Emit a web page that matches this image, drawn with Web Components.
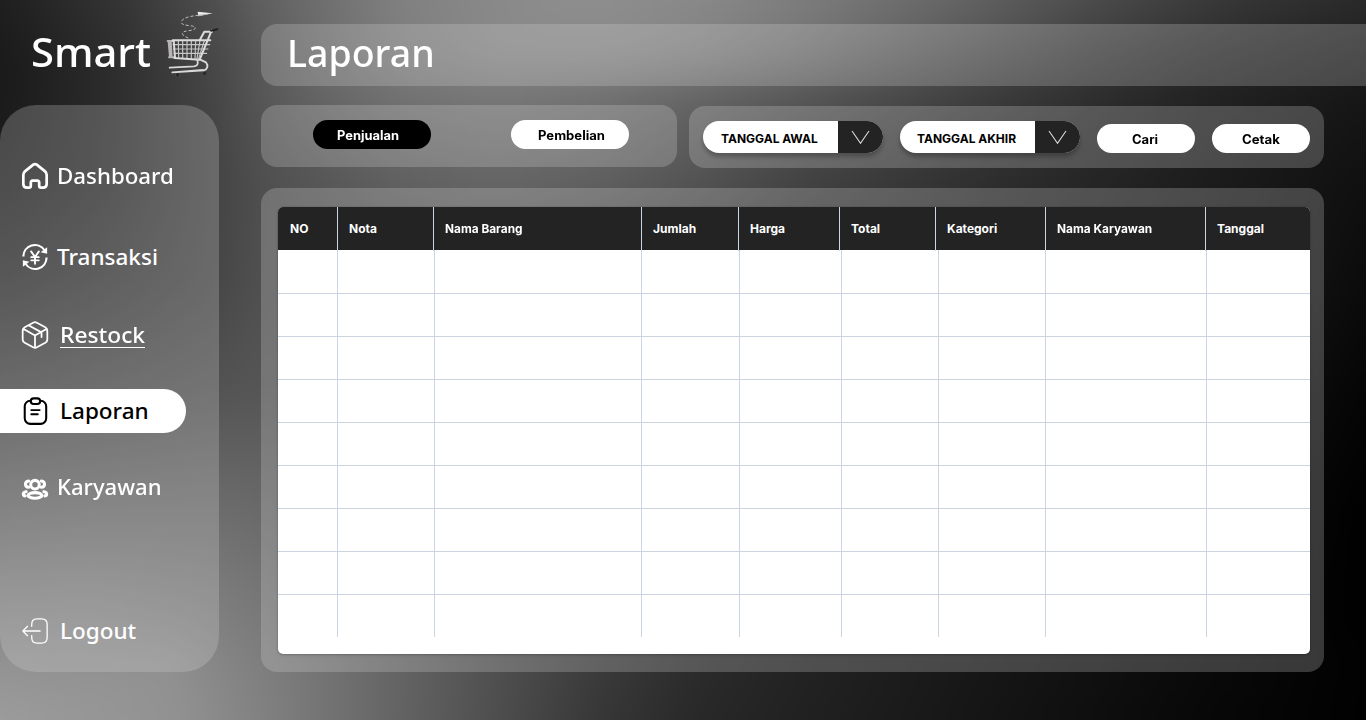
<!DOCTYPE html>
<html lang="id">
<head>
<meta charset="utf-8">
<title>Laporan</title>
<style>
html,body{margin:0;height:100%;overflow:hidden;background:#000}
</style>
</head>
<body>
<report-page></report-page>
<script>
const define=(name,html,setup)=>customElements.define(name,class extends HTMLElement{
  connectedCallback(){
    if(this.shadowRoot)return;
    const t=document.createElement('template');
    t.innerHTML=typeof html==='function'?html(this):html;
    this.attachShadow({mode:'open'}).append(t.content.cloneNode(true));
    if(setup)setup(this);
  }
});

/* Text scaled horizontally to the width given in its attribute */
define('fit-text',`<style>:host{display:inline-block;white-space:nowrap}span{display:inline-block;transform-origin:0 50%}</style><span><slot></slot></span>`,el=>{
  const w=+el.getAttribute('width'),s=el.shadowRoot.querySelector('span');
  s.style.transform=`scaleX(${w/s.offsetWidth})`;
  el.style.width=w+'px';
});

/* Mesh backdrop: horizontal gradients blended into each other down the page */
const mesh=[
 [0,[[0,32],[120,54],[219,82],[261,98],[400,130],[500,139],[585,144],[700,138],[804,126],[950,104],[1097,77],[1243,55],[1366,43]]],
 [55,[[0,27],[120,48],[219,74],[261,90],[320,108],[400,126],[500,137],[620,137],[700,130],[800,115],[900,95],[1000,76],[1100,58],[1200,44],[1366,30]]],
 [97,[[0,27],[100,43],[219,72],[261,88],[330,104],[400,115],[500,120],[600,114],[690,102],[800,87],[900,73],[1000,59],[1100,46],[1200,36],[1366,23]]],
 [180,[[0,32],[100,44],[219,70],[261,80],[400,98],[500,103],[600,97],[700,84],[800,68],[1000,46],[1200,30],[1366,17]]],
 [280,[[0,46],[100,56],[219,71],[261,82],[500,85],[800,55],[1100,33],[1320,18],[1366,12]]],
 [390,[[0,71],[100,77],[219,84],[261,87],[500,80],[800,45],[1100,25],[1320,11],[1366,6]]],
 [500,[[0,102],[100,106],[219,108],[261,105],[500,80],[800,40],[1100,21],[1320,6],[1366,2]]],
 [600,[[0,132],[100,133],[219,126],[261,120],[400,96],[600,60],[800,36],[1100,18],[1320,4],[1366,1]]],
 [672,[[0,149],[170,147],[219,136],[300,122],[400,101],[500,80],[600,60],[700,44],[800,36],[1000,23],[1200,11],[1366,3]]],
 [720,[[0,157],[110,151],[190,145],[219,139],[300,122],[400,100],[500,78],[600,55],[700,41],[800,34],[1000,21],[1200,9],[1366,2]]]
];
const bleed=50;
define('mesh-backdrop',()=>`<style>
:host{display:grid;margin:-${bleed}px;filter:blur(16px)}
i{grid-area:1/1}
</style>`+mesh.map(([y,s],k)=>{
  const g='linear-gradient(90deg,'+s.map(([x,v])=>`rgb(${v},${v-1},${v}) ${x+bleed}px`).join()+')';
  const r=k&&`linear-gradient(transparent ${mesh[k-1][0]+bleed}px,#000 ${y+bleed}px)`;
  const m=k?`;-webkit-mask-image:${r};mask-image:${r}`:'';
  return `<i style="background:${g}${m}"></i>`;
}).join(''));

define('cart-logo',`<style>:host{display:block;width:70px;height:75px}svg{display:block}</style>
<svg width="70" height="75" viewBox="0 0 210 225" fill="none" stroke-linecap="round" stroke-linejoin="round">
<path d="M130 31C112 33 84 36 79 50C76 66 122 58 121 69C118 80 82 74 82 86C84 94 96 96 104 102" stroke="#d0d0d0" stroke-width="2.600" stroke-dasharray="9 6" stroke-linecap="butt"/>
<path d="M128 20l45 5-43 9z" fill="#ececec"/><path d="M130 29l43-4-43 9z" fill="#b5b5b5"/>
<circle cx="68" cy="210" r="7" fill="#2a2a2a" stroke="#484848" stroke-width="3"/><circle cx="149" cy="205" r="7" fill="#2a2a2a" stroke="#484848" stroke-width="3"/>
<path d="M47 108l3 48M41 110l4 46M38 108h18M42 157h16" stroke="#b8b4b4" stroke-width="6"/>
<path d="M70 107l1 50M83 107v51M96 107v52M109 107v53M122 107l-2 54M135 107l-9 53M148 107l-17 54M54 119h110M55 132h104M57 145h98" stroke="#c6c6c6" stroke-width="3.500"/>
<path d="M53 106h113M58 159l76 5M56 107l4 51M134 164l36-88M134 106l14-26h23" stroke="#dcdcdc" stroke-width="6"/>
<path d="M168 77l19-4" stroke="#202020" stroke-width="6"/>
<path d="M127 165c4 14-1 18-10 19l-73 4M136 164l17 8c8 10 4 22-6 24l-95 6M52 202l92-7" stroke="#d8d8d8" stroke-width="5.500"/>
</svg>`);

const icons={
home:`<path d="M4.500 9.800 13.200 2.800q1.800-1.200 3.600 0L25.500 9.800Q27.500 11.400 27.500 14V23.500Q27.500 27.500 23.500 27.500H21.500Q19.500 27.500 19.500 25.500V22.500Q19.500 20 17.500 20H12.500Q10.500 20 10.500 22.500V25.500Q10.500 27.500 8.500 27.500H6.500Q2.500 27.500 2.500 23.500V14Q2.500 11.400 4.500 9.800Z" stroke-width="2.900"/>`,
yen:`<path d="M2.600 14.500A12.300 12.300 0 0 1 25 7.500M27.400 15.500A12.300 12.300 0 0 1 5 22.500" stroke-width="2.300" stroke-linecap="butt"/><path d="M28 4.500v7l-7-1.500zM2 25.500v-7l7 1.500z" fill="currentColor" stroke="none"/><path d="M10.800 9l4.200 6 4.200-6M15 15v7.200M11 15.200h8M11 18.600h8" stroke-width="2"/>`,
box:`<path d="M13 1.800q2-1 4 0l9 4.800q2.200 1.300 2.200 3.700v9.400q0 2.400-2.200 3.700l-9 4.800q-2 1-4 0l-9-4.800q-2.200-1.300-2.200-3.700v-9.400q0-2.400 2.200-3.700zM2.800 8.500 15 15.500l12.200-7M15 15.500v13M8.500 4.800 22 12.200v5" stroke-width="1.900"/>`,
clip:`<rect x="4" y="4" width="23" height="24.800" rx="6" stroke-width="2.200"/><path d="M10.500 4.500q0-3 3-3h4q3 0 3 3t-3 3h-4q-3 0-3-3z" fill="#fff" stroke-width="2.200"/><path d="M11 14h9M11 18.500h7" stroke-width="2"/>`,
people:`<g stroke-width="3.300"><circle cx="15" cy="12.500" r="4.600"/><ellipse cx="15" cy="24" rx="7.300" ry="3"/><path d="M8.200 8.500Q4.800 9 4.800 12t3.400 3.300M21.800 8.500Q25.200 9 25.200 12t-3.400 3.300M5.500 20Q2.500 20.500 2.500 22.500T4.500 24.500M24.500 20Q27.500 20.500 27.500 22.500T25.500 24.500"/></g>`,
exit:`<path d="M11.500 10V8q0-6 5.500-6h5Q28 2 28 8v14q0 6-6 6h-5q-5.500 0-5.500-6v-2M20.500 15H2M7 10 2 15l5 5" stroke-width="1.400"/>`
};
define('menu-icon',el=>`<style>:host{display:block;width:28px;height:28px;flex:none}svg{display:block}</style>
<svg width="28" height="28" viewBox="0 0 30 30" fill="none" stroke="currentColor" stroke-linecap="round" stroke-linejoin="round">${icons[el.getAttribute('name')]}</svg>`);

define('menu-item',el=>`<style>
:host{display:flex;align-items:center;box-sizing:border-box;height:44px;width:186px;padding-left:21px;color:#fff;font:500 22.500px/44px "Noto Sans",sans-serif}
:host([active]){background:#fff;color:#000;border-radius:0 22px 22px 0}
.label{margin-left:${el.getAttribute('gap')}px;height:44px}
:host([linked]) .line{border-bottom:1px solid #fff;line-height:24px;height:24px;margin-top:10px}
</style><menu-icon name="${el.getAttribute('icon')}"></menu-icon><div class="label"><div class="line"><fit-text width="${el.getAttribute('w')}"><slot></slot></fit-text></div></div>`);

define('side-menu',`<style>
:host{display:flex;flex-direction:column;box-sizing:border-box;width:219px;height:567px;padding-top:49px;border-radius:36px;background:rgba(217,217,217,.25)}
</style>
<menu-item icon="home" gap="8" w="117">Dashboard</menu-item>
<menu-item icon="yen" gap="8" w="101" style="margin-top:37px">Transaksi</menu-item>
<menu-item icon="box" gap="11" w="85" linked style="margin-top:34px">Restock</menu-item>
<menu-item icon="clip" gap="11" w="89" active style="margin-top:32px">Laporan</menu-item>
<menu-item icon="people" gap="8" w="105" style="margin-top:32px">Karyawan</menu-item>
<menu-item icon="exit" gap="11" w="76" style="margin-top:100px">Logout</menu-item>`);

define('glass-panel',`<style>:host{display:flex;box-sizing:border-box;border-radius:16px;background:rgba(217,217,217,.25)}</style><slot></slot>`);

define('pill-button',el=>`<style>
:host{display:flex;justify-content:center;box-sizing:border-box;width:98px;height:29px;border-radius:15px;background:#fff;color:#000;font:700 12.500px/31px Inter,sans-serif}
:host([wide]){width:118px}
:host([dark]){background:#000;color:#fff}
</style><fit-text width="${el.getAttribute('w')}"><slot></slot></fit-text>`);

define('date-select',el=>`<style>
:host{display:flex;width:180px;height:32px;border-radius:16px;overflow:hidden;background:#fff;color:#000;box-shadow:0 4px 4px rgba(0,0,0,.25);font:700 12px/36px Inter,sans-serif}
.t{box-sizing:border-box;width:135px;padding-left:${el.getAttribute('inset')}px}
.v{width:45px;background:#232323;display:flex;align-items:center;justify-content:center}
</style><div class="t"><fit-text width="${el.getAttribute('w')}"><slot></slot></fit-text></div><div class="v"><svg width="20" height="16" viewBox="0 0 20 16" fill="none" stroke="#ddd" stroke-width="1.100"><path d="M1 2 9.500 14.300 18 2"/></svg></div>`);

const heads=[['NO',18],['Nota',28],['Nama Barang',78],['Jumlah',43],['Harga',35],['Total',29],['Kategori',50],['Nama Karyawan',95],['Tanggal',47]];
define('report-table',`<style>
:host{display:flex;flex-direction:column;width:1032px;height:447px;border-radius:5px;overflow:hidden;background:#fff;box-shadow:0 0 1px rgba(0,0,0,.4),0 1px 3px rgba(0,0,0,.2)}
.head{display:grid;height:43px;grid-template-columns:59px 96px 208px 97px 101px 96px 110px 160px 105px;background:#232323;color:#fff;font:700 12px/44px Inter,sans-serif}
.row{display:grid;height:43px;grid-template-columns:59px 97px 207px 98px 102px 97px 107px 161px 104px}
.head>div,.row>div{box-sizing:border-box;border-left:1px solid #cbd5e1}
.head>div{padding-left:11px}
.head>div:first-child{border-left:0;padding-left:12px}
.row>div:first-child{border-left:0}
.row+.row>div{border-top:1px solid #cbd5e1}
</style><div class="head">${heads.map(([t,w])=>`<div><fit-text width="${w}">${t}</fit-text></div>`).join('')}</div>
${('<div class="row">'+'<div></div>'.repeat(9)+'</div>').repeat(9)}`);

define('report-page',`<style>
:host{display:grid;grid-template:720px/1366px;width:1366px;height:720px;overflow:hidden}
mesh-backdrop,.app{grid-area:1/1}
.app{display:grid;grid-template-columns:261px 1105px;z-index:1}
.brand{display:flex;height:105px;box-sizing:border-box;padding-left:31px;color:#fff;font:500 40px/103px "Noto Sans",sans-serif}
cart-logo{margin:5px 0 0 4px}
.main{display:flex;flex-direction:column;padding-top:24px}
.title{height:62px;border-radius:16px 0 0 16px;padding-left:26px;color:#fff;font:500 38.500px/57px "Noto Sans",sans-serif}
.tools{display:flex;gap:12px;margin-top:19px;height:63px}
.tabs{width:416px;height:62px;padding:15px 0 0 52px;gap:80px}
.filters{width:635px;height:62px;margin-top:1px;padding:15px 0 0 14px;gap:17px}
.filters pill-button{margin-top:3px}
.sheet{width:1063px;height:484px;margin-top:20px;padding:19px 0 0 17px}
</style>
<mesh-backdrop></mesh-backdrop>
<div class="app">
<div><div class="brand"><fit-text width="120">Smart</fit-text><cart-logo></cart-logo></div><side-menu></side-menu></div>
<div class="main">
<glass-panel class="title"><fit-text width="148">Laporan</fit-text></glass-panel>
<div class="tools">
<glass-panel class="tabs"><pill-button wide dark w="62" style="padding-right:8px">Penjualan</pill-button><pill-button wide w="67" style="padding-left:3px">Pembelian</pill-button></glass-panel>
<glass-panel class="filters"><date-select w="97" inset="18">TANGGAL AWAL</date-select><date-select w="99" inset="17">TANGGAL AKHIR</date-select><pill-button w="26" style="padding-right:2px">Cari</pill-button><pill-button w="38">Cetak</pill-button></glass-panel>
</div>
<glass-panel class="sheet"><report-table></report-table></glass-panel>
</div>
</div>`);
</script>
</body>
</html>
